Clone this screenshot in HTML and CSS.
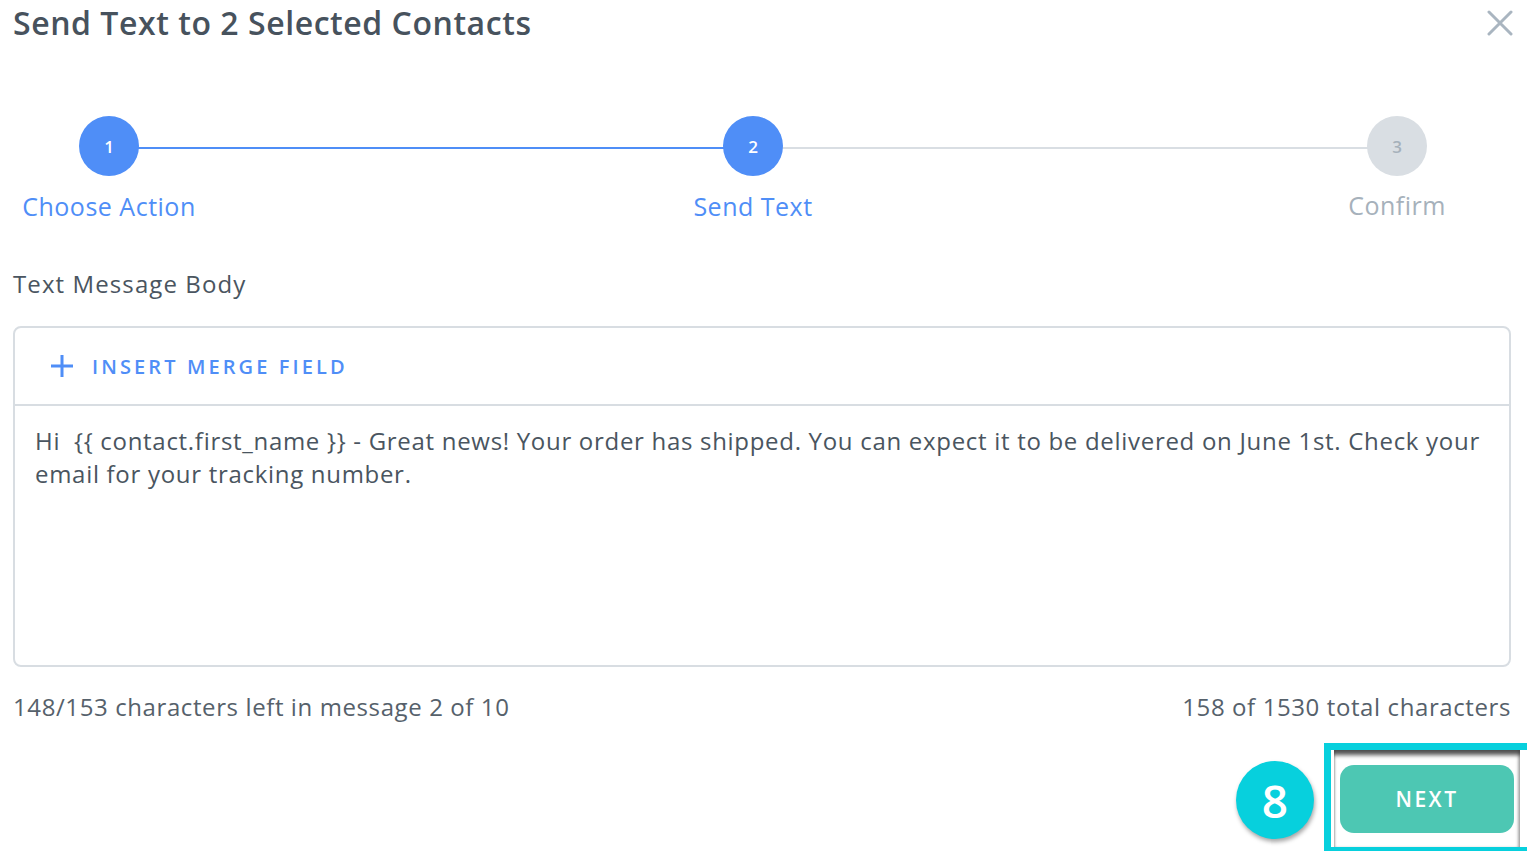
FILE: index.html
```
<!DOCTYPE html>
<html>
<head>
<meta charset="utf-8">
<link rel="stylesheet" href="styles.css">
</head>
<body>
<div class="modal">
  <div class="header">
    <h1 class="title">Send Text to 2 Selected Contacts</h1>
    <svg class="close" width="26" height="26" viewBox="0 0 26 26"><path d="M2 2 L24 24 M24 2 L2 24" stroke="#a9b5c0" stroke-width="3" stroke-linecap="round"/></svg>
  </div>

  <div class="stepper">
    <div class="circle active">1</div>
    <div class="line done"></div>
    <div class="circle active">2</div>
    <div class="line"></div>
    <div class="circle">3</div>
    <div class="label active">Choose Action</div>
    <div class="label active mid">Send Text</div>
    <div class="label last">Confirm</div>
  </div>

  <div class="field-label">Text Message Body</div>

  <div class="editor">
    <div class="toolbar">
      <svg class="plus" width="24" height="24" viewBox="0 0 24 24"><path d="M12 1 V23 M1 12 H23" stroke="#4f8ef7" stroke-width="3"/></svg>
      <span class="merge">INSERT MERGE FIELD</span>
    </div>
    <div class="body-text">Hi &nbsp;{{ contact.first_name }} - Great news! Your order has shipped. You can expect it to be delivered on June 1st. Check your email for your tracking number.</div>
  </div>

  <div class="counts">
    <span>148/153 characters left in message 2 of 10</span>
    <span>158 of 1530 total characters</span>
  </div>

  <div class="actions">
    <div class="badge">8</div>
    <div class="highlight">
      <div class="inner">
        <button class="next">NEXT</button>
      </div>
    </div>
  </div>
</div>
</body>
</html>
```
FILE: styles.css
```
html, body {
  margin: 0;
  padding: 0;
  background: #fff;
  overflow: hidden;
}
body {
  width: 1527px;
  height: 851px;
  font-family: "Open Sans", Lato, sans-serif;
  color: #4a5560;
}
.modal {
  display: flex;
  flex-direction: column;
  padding: 0 16px 0 13px;
  height: 851px;
  box-sizing: border-box;
}
.header {
  display: flex;
  justify-content: space-between;
  align-items: flex-start;
  height: 116px;
}
.title {
  margin: 3px 0 0 0;
  font-size: 32px;
  line-height: 40px;
  font-weight: 600;
  color: #47525d;
  letter-spacing: 0.55px;
}
.close {
  margin-top: 10px;
  margin-right: -2px;
}
.stepper {
  display: grid;
  grid-template-columns: 218px 426px 218px 426px 218px;
  grid-template-rows: 60px auto;
  margin-left: -13px;
  align-items: center;
}
.circle {
  justify-self: center;
  width: 60px;
  height: 60px;
  border-radius: 50%;
  background: #d9dee3;
  color: #a6b1bb;
  display: flex;
  align-items: center;
  justify-content: center;
  font-size: 17px;
  font-weight: 600;
  position: relative;
  z-index: 1;
}
.circle.active {
  background: #4f8ef7;
  color: #fff;
}
.line {
  height: 2px;
  background: #d9dee3;
  margin: 4px -80px 0;
}
.line.done {
  background: #4f8ef7;
}
.label {
  justify-self: center;
  white-space: nowrap;
  font-size: 25px;
  line-height: 30px;
  margin-top: 15px;
  color: #a6b1bb;
  letter-spacing: 0.5px;
}
.label.active {
  color: #4f8ef7;
}
.label.mid {
  grid-column: 3;
}
.label.last {
  grid-column: 5;
  margin-top: 12px;
}
.field-label {
  margin-top: 48px;
  font-size: 24px;
  line-height: 30px;
  color: #4a5560;
  letter-spacing: 1.1px;
}
.editor {
  margin-top: 27px;
  border: 2px solid #d8dde2;
  border-radius: 8px;
  height: 341px;
  box-sizing: border-box;
  display: flex;
  flex-direction: column;
}
.toolbar {
  height: 76px;
  border-bottom: 2px solid #d8dde2;
  display: flex;
  align-items: center;
  padding-left: 35px;
  gap: 18px;
  flex-shrink: 0;
}
.merge {
  color: #4f8ef7;
  font-size: 20px;
  font-weight: 600;
  letter-spacing: 3.1px;
}
.body-text {
  padding: 18px 20px 0 20px;
  font-size: 24px;
  line-height: 33px;
  color: #4a5560;
  letter-spacing: 0.7px;
}
.counts {
  display: flex;
  justify-content: space-between;
  margin-top: 25px;
  font-size: 24px;
  line-height: 30px;
  color: #56616b;
  letter-spacing: 0.6px;
}
.actions {
  display: flex;
  justify-content: flex-end;
  align-items: center;
  gap: 10px;
  margin-top: 21px;
  margin-right: -16px;
}
.badge {
  width: 78px;
  height: 78px;
  border-radius: 50%;
  background: #07d0dd;
  color: #fff;
  font-size: 46px;
  font-weight: 600;
  display: flex;
  align-items: center;
  justify-content: center;
  box-shadow: 1px 3px 4px rgba(0,0,0,0.35);
  margin-top: 6px;
}
.highlight {
  width: 203px;
  height: 108px;
  box-sizing: border-box;
  border: 7px solid #07d0dd;
  border-right: none;
  border-bottom-width: 4px;
  padding: 0 7px 0 3px;
}
.inner {
  height: 100%;
  box-sizing: border-box;
  box-shadow: inset 0 7px 4px -2px rgba(50,50,50,0.85), inset 2px 0 2px -1px rgba(0,0,0,0.25), inset -3px 0 3px -1px rgba(0,0,0,0.3);
  padding: 15px 6px 0 6px;
}
.next {
  display: block;
  width: 100%;
  height: 68px;
  border: none;
  border-radius: 14px;
  background: #4dc7b3;
  color: #fff;
  font-family: "Open Sans", Lato, sans-serif;
  font-size: 21px;
  font-weight: 600;
  letter-spacing: 2.5px;
}
```
